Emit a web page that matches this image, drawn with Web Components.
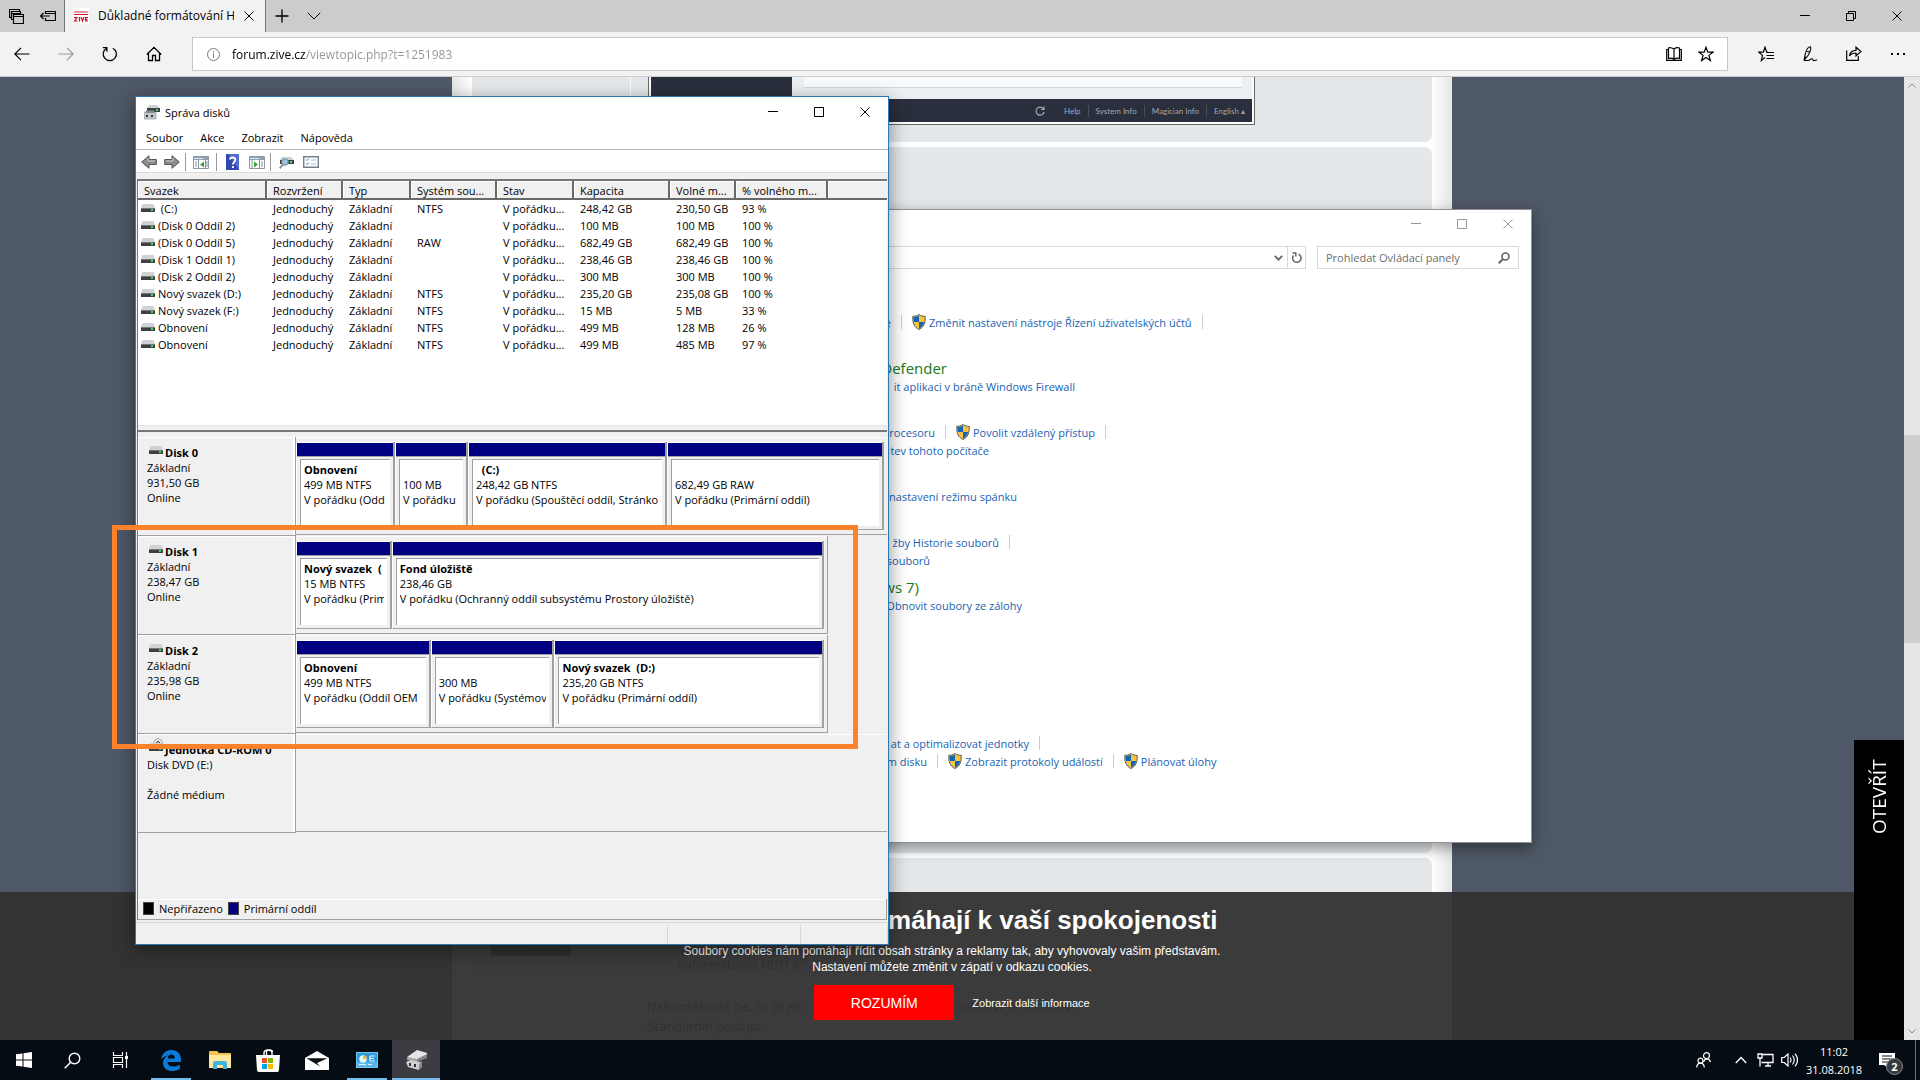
<!DOCTYPE html>
<html lang="cs">
<head>
<meta charset="utf-8">
<title>Správa disků</title>
<style>
html,body{margin:0;height:100%;overflow:hidden}
body{font:11px/15px "Open Sans","Noto Sans",sans-serif;color:#000}
</style>
</head>
<body>
<desk-top></desk-top>
<script>
const base = `*{box-sizing:border-box}button,input,h1,h2,p,a,ul{font:inherit;color:inherit;margin:0;padding:0}
button{border:0;background:none;display:flex;align-items:center;justify-content:center;flex:none}a{text-decoration:none}`;
function define(name, css, html) {
  const tpl = document.createElement('template');
  customElements.define(name, class extends HTMLElement {
    constructor() {
      super();
      tpl.innerHTML = `<style>${base}${css}</style>${typeof html === 'function' ? html(this) : html}`;
      this.attachShadow({mode: 'open'}).append(tpl.content.cloneNode(true));
    }
  });
}

/* ---------- icons ---------- */
const L = 'fill="none" stroke="currentColor"';
const drive = '<path d="M1.500 0h11L14 4H0z" fill="#cfd3d5"/><path d="M0 4h14v4H0z" fill="#3d4142"/><path d="M0 4h14v1H0z" fill="#777"/><path d="M10 5h2v2h-2z" fill="#35e05a"/>';
const icons = {
  tabs: [15, 15, `<path d="M10.500 2.500V.5H.5v8h2M2.500 4.500h9v-2h-9v8h2M4.500 5.500h10v9h-10zM4.500 7.500h10" ${L} stroke-width="1.200"/>`],
  aside: [16, 12, `<path d="M5.500 4V1.500h10v9h-10V8M5.500 3.500h10M.8 6h9M3.500 3 .7 6l2.800 3" ${L} stroke-width="1.200"/>`],
  favicon: [16, 16, `<path fill="#fff" d="M0 0h16v16H0z"/><path d="M1 4.500l1-1 1 1 1-1 1 1 1-1 1 1 1-1 1 1 1-1 1 1 1-1 1 1 1-1 1 1M1 6.500h14" fill="none" stroke="#c8102e" stroke-width="1"/><path d="M1 9.500h3L1.500 13H4.500M6.500 9V13.500M8 9l1.500 4L11 9M15 13h-2.500V9.500H15M12.500 11.300h2" fill="none" stroke="#c8102e" stroke-width="1.200"/>`],
  close: [10, 10, `<path d="M.5.5l9 9M9.500.5l-9 9" ${L}/>`],
  plus: [14, 14, `<path d="M7 .5v13M.5 7h13" ${L} stroke-width="1.300"/>`],
  down: [14, 8, `<path d="M.8.800 7 7 13.200.8" ${L}/>`],
  up: [12, 8, `<path d="M.8 7 6 1.500 11.200 7" ${L} stroke-width="1.400"/>`],
  min: [10, 10, `<path d="M0 4.500h10" ${L}/>`],
  max: [10, 10, `<path d="M.5.5h9v9h-9z" ${L}/>`],
  restore: [10, 10, `<path d="M.5 2.500h7v7h-7zM2.500 2.500v-2h7v7h-2" ${L}/>`],
  back: [16, 14, `<path d="M15.500 7H1M7 .8.800 7 7 13.200" ${L} stroke-width="1.200"/>`],
  fwd: [16, 14, `<path d="M.5 7H15M9 .8 15.200 7 9 13.200" ${L} stroke-width="1.200"/>`],
  reload: [16, 16, `<path d="M4.800 2.200a6.600 6.600 0 1 0 6 0M.9 1.700h4v4" ${L} stroke-width="1.200"/>`],
  home: [16, 16, `<path d="M.8 8.500 8 1.300l7.200 7.200M2.500 7v7.500h4V9.500h3v5h4V7" ${L} stroke-width="1.300"/>`],
  info: [13, 13, `<circle cx="6.500" cy="6.500" r="6" ${L}/><path d="M6.500 3v1.500M6.500 5.500V10" ${L}/>`],
  book: [16, 16, `<path d="M8 3C6 1.500 3 1.500 2.500 2v10.500c2-.5 4-.3 5.500.8 1.500-1.100 3.500-1.300 5.500-.8V2C12 1.500 10 1.500 8 3zv10M2 3.500H.7v10.800h14.600V3.500H14" ${L} stroke-width="1.200"/>`],
  star: [16, 16, `<path d="M8 1.200l1.800 5h5.200l-4.100 3.200 1.500 5.200L8 11.500l-4.400 3.100 1.500-5.200L1 6.200h5.200z" ${L} stroke-width="1.200"/>`],
  favs: [16, 16, `<path d="M10 6.200H8.700L7 1.200l-1.700 5H.8l3.700 3.200-1.200 5 3.700-2.900M8.500 6.500H16M8.500 9.500H16M8.500 12.500H16" ${L} stroke-width="1.200"/>`],
  pen: [16, 16, `<path d="M2 14.500 3 9c1-4 3-8 5-8.200 1.500.2.800 3.700-1.500 8L2 14.500l1.500-4M5 5.500l3 .5M2 14.500h4c2 0 2.500-2 4-1.800 1.200.3.500 2 2 2 1.300 0 1.500-1 3.200-.7" ${L} stroke-width="1.100"/>`],
  share: [16, 16, `<path d="M.7 4.500v9.800h11.600V10M3.500 10c.5-4 3-5.700 6.500-5.700V1.200l5 4.300-5 4.500V7c-3 0-5 .8-6.500 3z" ${L} stroke-width="1.200"/>`],
  dots: [16, 4, `<path d="M1 1h2v2H1zM7 1h2v2H7zM13 1h2v2h-2z" fill="currentColor"/>`],
  cup: [8, 5, `<path d="M.5 4.500 4 1l3.500 3.500" ${L}/>`],
  cdown: [8, 5, `<path d="M.5.5 4 4 7.500.5" ${L}/>`],
  chev: [9, 6, `<path d="M.8.800 4.500 4.700 8.200.8" ${L} stroke-width="1.800"/>`],
  redo: [11, 12, `<path d="M7.500 2.200a4.200 4.200 0 1 1-5 1.300M1.500 1h3.300v3.600" ${L} stroke-width="1.500"/>`],
  spin: [10, 10, `<path d="M8.500 3A4 4 0 1 0 9 6M9 .5V3.500H6" ${L} stroke-width="1.200"/>`],
  find: [12, 12, `<circle cx="7.500" cy="4.500" r="3.500" ${L} stroke-width="1.600"/><path d="M5 7 .7 11.300" ${L} stroke-width="2"/>`],
  shield: [14, 16, `<path d="M7 .5C5 2 3 2.300.8 2.300.5 9 2 13 7 15.500 12 13 13.500 9 13.200 2.300 11 2.300 9 2 7 .5z" fill="#f8c140" stroke="#555c60"/><path d="M7 1.500C5 2.700 3.500 3 1.500 3 1.300 5 1.500 6.500 2 8h5zM7 8v6.700c3-1.600 4.500-3.800 5.200-6.700z" fill="#1267b3"/>`],
  drive: [14, 9, drive],
  cd: [14, 14, `<circle cx="9" cy="5" r="4.300" fill="#eceeee" stroke="#9aa3a6"/><circle cx="9" cy="5" r="1.500" ${L} stroke-width=".8"/><g transform="translate(0,5)">${drive}</g>`],
  app: [16, 16, '<path d="M5 1h8l3 3H3z" fill="#cfd3d5"/><path d="M3 4h13v4H3z" fill="#3d4142"/><path d="M12 5h2v2h-2z" fill="#35e05a"/><path d="M0 8h12v7H0z" fill="#c4c7c9" stroke="#8b8f91" stroke-width=".6"/><path d="M2 6.500h8V9H2z" fill="#898d90"/><path d="M2 11h2v2H2zM7 11h2v2H7z" fill="#333"/>'],
  arrL: [16, 14, '<path d="M8 .7v3.800h7.300v5H8v3.800L.7 7z" fill="#8c8c8c" stroke="#555"/><path d="M7 3v3h7" fill="none" stroke="#c7c7c7"/>'],
  arrR: [16, 14, '<path d="M8 .7v3.800H.7v5H8v3.800L15.300 7z" fill="#8c8c8c" stroke="#555"/><path d="M2 6h7V3" fill="none" stroke="#c7c7c7"/>'],
  paneL: [16, 13, '<path d="M.5.5h15v12H.5z" fill="#fff" stroke="#8b99a6"/><path d="M1 1h14v3H1z" fill="#8fa0b0"/><path d="M1 2.500h9" stroke="#dfe6ec"/><path d="M5.500 4v9M12.500 4v9M2 6h2M2 8h2M2 10h2M13 6h2M13 8h2M13 10h2" stroke="#8293a3"/><path d="M11 5.500v6L7 8.500z" fill="#36a832"/>'],
  paneR: [16, 13, '<path d="M.5.5h15v12H.5z" fill="#fff" stroke="#8b99a6"/><path d="M1 1h14v3H1z" fill="#8fa0b0"/><path d="M1 2.500h9" stroke="#dfe6ec"/><path d="M10.500 4v9M3 4v9M12 6h2M12 8h2M12 10h2" stroke="#8293a3"/><path d="M5 5.500v6l4-3z" fill="#36a832"/>'],
  help: [13, 16, '<path d="M0 0h13v16H0z" fill="#2f49ae"/><path d="M2 0h11v16z" fill="#526cd0"/><path d="M4 5.500C4 3 9.500 2.600 9.300 5.800 9 8 7 8 7 10.500M7 12v2" fill="none" stroke="#fff" stroke-width="1.800"/>'],
  scan: [15, 13, '<path d="M3 1h9l3 3H1z" fill="#cfd3d5"/><path d="M1 4h14v4H1z" fill="#3d4142"/><path d="M11 5h2v2h-2z" fill="#35e05a"/><circle cx="6" cy="6" r="3.300" fill="#9fc4dd" stroke="#6f8a99"/><path d="M4 8.500.7 12.300" stroke="#7a8d98" stroke-width="1.800"/>'],
  list: [16, 12, '<path d="M.7.700h14.600v10.600H.7z" fill="#fff" stroke="#74808a" stroke-width="1.400"/><path d="M3 3.500l1 1 2-2M3 7.500l1 1 2-2" fill="none" stroke="#2c7cc8"/><path d="M8 4h5M8 8h5" stroke="#aab2b8"/>'],
  win: [16, 16, '<path d="M0 2.300 6.500 1.400v6.100H0zM7.500 1.300 16 0v7.500H7.500zM0 8.500h6.500v6.100L0 13.700zM7.500 8.500H16V16l-8.500-1.300z" fill="#fff"/>'],
  search: [17, 17, '<circle cx="10.500" cy="6.500" r="5.300" fill="none" stroke="#fff" stroke-width="1.400"/><path d="M6.700 10.300.7 16.300" stroke="#fff" stroke-width="1.500"/>'],
  task: [16, 16, '<path d="M1.500 0v3.500h9V0M1.500 16v-3.500h9V16M1.500 5.500h9v5h-9zM14.500 0v16" fill="none" stroke="#fff" stroke-width="1.200"/><path d="M13 4h3v3h-3z" fill="#fff"/>'],
  edge: [20, 21, '<path d="M0 9.500C1 4 4.500 0 10.300 0 17 0 20 5 20 9v3H6.500c.2 3 2.500 4.500 5.700 4.500 2.600 0 4.600-.7 6.600-1.800v4.400c-2 1.300-4.500 1.900-7.300 1.900C5.500 21 2 17.500 2 13c0-3.500 2-6 5-7.500C4 6 1.500 7.500 0 9.500zM6.700 8.500h7.200C13.900 6 12.500 4.500 10.400 4.500 8.400 4.500 7 6 6.700 8.500z" fill="#0a7bd8"/>'],
  folder: [22, 18, '<path d="M0 1Q0 0 1 0h7l2 2h11q1 0 1 1v14H0z" fill="#f5c64e"/><path d="M0 4h22v13H0z" fill="#ffe9a0"/><path d="M4 18v-6q0-2 2-2h10q2 0 2 2v6h-4v-4H8v4z" fill="#3fb3dc"/>'],
  store: [24, 23, '<path d="M8 7V4q0-3 4-3t4 3v3M10.500 6V3q0-2 3-2t3 2" fill="none" stroke="#fff" stroke-width="1.400"/><path d="M0 6h24l-1 15q0 2-2 2H3q-2 0-2-2z" fill="#fff"/><path d="M6 9h5v5H6z" fill="#f25022"/><path d="M12 9h5v5h-5z" fill="#7fba00"/><path d="M6 15h5v5H6z" fill="#00a4ef"/><path d="M12 15h5v5h-5z" fill="#ffb900"/>'],
  mail: [24, 19, '<path d="M0 7 12 0l12 7v12H0z" fill="#fff"/><path d="M1.500 7.300h21L12 12l3 3.500z" fill="#0b1017"/>'],
  panel: [22, 16, '<path d="M0 0h22v16H0z" fill="#72c5f1"/><path d="M1 1h20v14H1z" fill="#2c9ade"/><path d="M1 10h20v5H1z" fill="#58b7ea"/><circle cx="7" cy="7" r="3.800" fill="#e6f6ff"/><path d="M7 7V3.200A3.800 3.800 0 0 1 10.800 7z" fill="#f8b133"/><path d="M14 4v5M14 4h5M14 6.500h4M14 9h5M3 12.500h7M12 12.500h4" stroke="#e6f6ff" stroke-width="1.200"/>'],
  dm: [22, 20, '<path d="M2 7 12 0l10 3v4l-10 4z" fill="#e4e4e4"/><path d="M22 4v4l-10 4V9z" fill="#858585"/><path d="M2 7v3l10 2V9z" fill="#a5a5a5"/><path d="M1 12l5-2 9 2-1 8-11-3z" fill="#cfcfcf"/><path d="M4 13h2v3H4zM9 14h2v3H9z" fill="#333"/><path d="M15 12l2-1v6l-3 3z" fill="#8f8f8f"/>'],
  people: [16, 16, '<circle cx="10.500" cy="3.700" r="3" fill="none" stroke="#fff" stroke-width="1.200"/><circle cx="4.500" cy="8.700" r="2.500" fill="none" stroke="#fff" stroke-width="1.200"/><path d="M7.500 10q1-3.200 3.500-3.200T14.500 10M.7 15.500q.3-4.300 3.800-4.300t3.800 4.300" fill="none" stroke="#fff" stroke-width="1.200"/>'],
  net: [17, 14, '<path d="M5 1.500h11v8H4.500M8 13h6M11 9.500V13M1 1h4v4H1zM3 5v8.500" fill="none" stroke="#fff" stroke-width="1.300"/>'],
  sound: [17, 14, '<path d="M.7 4.500h2.500L7 1v12L3.200 9.500H.7z" fill="none" stroke="#fff" stroke-width="1.200"/><path d="M9 4.500q2 2.500 0 5M11.500 2.500q3.500 4.500 0 9M14 .7q5 6.300 0 12.600" fill="none" stroke="#fff" stroke-width="1.200"/>'],
  note: [16, 15, '<path d="M0 0h16v12H9v3l-4-3H0z" fill="#fff"/><path d="M3 3h10M3 6h10M3 9h7" stroke="#0b1017" stroke-width="1.200"/>'],
  photo: [80, 90, '<path d="M0 0h80v90H0z" fill="#4d5440"/><path d="M0 60h80v30H0z" fill="#16190f"/><path d="M44 62h20v20H44z" fill="#3f3a10"/>'],
};
customElements.define('ui-icon', class extends HTMLElement {
  constructor() {
    super();
    this.attachShadow({mode: 'open'});
  }
  connectedCallback() {
    const [w, h, d] = icons[this.getAttribute('name')];
    this.shadowRoot.innerHTML = `<style>:host{display:inline-flex;flex:none}svg{display:block}</style>
      <svg width="${w}" height="${h}" viewBox="0 0 ${w} ${h}" aria-hidden="true">${d}</svg>`;
  }
});
const btn = (name, label, cls = '') => `<button class="${cls}" aria-label="${label}"><ui-icon name="${name}"></ui-icon></button>`;

/* ---------- browser ---------- */
define('browser-tabs', `:host{display:flex;height:32px;background:#ccc;align-items:stretch}
.l{display:flex;width:65px;border-right:1px solid #777}.l button{flex:1}
.tab{display:flex;align-items:center;width:201px;background:#f2f2f2;border-right:1px solid #777;padding:0 2px 0 8px;font-size:12px}
.t{width:136px;overflow:hidden;white-space:nowrap;margin:0 0 0 9px;line-height:20px}
.tab button{flex:1}.n{width:32px}.sp{flex:1}.w{width:46px}`,
`<div class="l">${btn('tabs', 'Karty')}${btn('aside', 'Odložit karty')}</div>
<div class="tab"><ui-icon name="favicon"></ui-icon><span class="t">Důkladné formátování H</span>${btn('close', 'Zavřít kartu')}</div>
${btn('plus', 'Nová karta', 'n')}${btn('down', 'Náhledy', 'n')}<span class="sp"></span>
${btn('min', 'Minimalizovat', 'w')}${btn('restore', 'Obnovit', 'w')}${btn('close', 'Zavřít', 'w')}`);

define('browser-bar', `:host{display:flex;height:45px;background:#f2f2f2;border-bottom:1px solid #c9cdd0;align-items:center}
button{width:44px;height:44px}.dim{color:#999}
.addr{flex:1;display:flex;align-items:center;height:34px;margin:0 16px;background:#fff;border:1px solid #c8c8c8;padding:0 5px 0 14px}
.addr ui-icon{color:#777}.addr button{width:32px;height:32px}.addr button ui-icon{color:#000}
input{flex:1;border:0;outline:0;height:24px;margin-left:12px;font-size:12px;color:#000;-webkit-text-fill-color:transparent;background:linear-gradient(90deg,#000 74px,#949494 74px);-webkit-background-clip:text;background-clip:text}`,
`${btn('back', 'Zpět')}${btn('fwd', 'Vpřed', 'dim')}${btn('reload', 'Obnovit')}${btn('home', 'Domů')}
<div class="addr"><ui-icon name="info"></ui-icon><input aria-label="Adresa" value="forum.zive.cz/viewtopic.php?t=1251983">${btn('book', 'Čtení')}${btn('star', 'Oblíbené')}</div>
${btn('favs', 'Centrum')}${btn('pen', 'Poznámky')}${btn('share', 'Sdílet')}${btn('dots', 'Další')}`);

define('scroll-bar', `:host{display:flex;flex-direction:column;align-items:center;width:16px;background:#e6e6e6;color:#888;padding:6px 0}
.a{flex:347}.t{flex:208;width:100%;background:#cdcdcd}.b{flex:386}`,
`<ui-icon name="cup"></ui-icon><div class="a"></div><div class="t"></div><div class="b"></div><ui-icon name="cdown"></ui-icon>`);

define('forum-page', `:host{display:flex;justify-content:center;background:#4f5866;min-height:0}
main{width:1000px;background:#fff;display:flex;flex-direction:column;gap:5px;padding:0 20px;background:linear-gradient(90deg,#e6e6e6,#fff 20px,#fff 980px,#e6e6e6)}
section{background:#e4e8eb;border-radius:7px;font:12px/20px "DejaVu Sans",sans-serif;color:#333}
.one{height:65px;border-radius:0 0 7px 7px;display:flex;padding-left:158px}
.side{border-left:1px solid #f6f8f9;width:18px}
.shot{width:607px;height:48px;border:solid #666;border-width:0 1px 1px;background:#fff;padding:0 2px 2px;display:flex;flex-direction:column}
.top{flex:1;display:flex;background:#eceff2}.dark{width:141px;background:#2a2f3d}.card{flex:1;margin:0 10px 11px 12px;background:#f8f9fa;border-bottom:1px solid #d4d8dc}
.bar{height:23px;background:#2a2f3d;display:flex;align-items:center;justify-content:flex-end;font:8px/12px Lato,sans-serif;color:#a4a8b2;padding-right:7px;gap:7px}
.bar ui-icon{margin-right:12px}.bar span+span{border-left:1px solid #4a4f5c;padding-left:7px}
.two{flex:none;height:706px}.three{flex:1;border-radius:7px 7px 0 0;display:flex;padding-left:19px;overflow:hidden}
ui-icon{align-self:center}.three ui-icon{align-self:flex-start;margin-top:8px}
.post{padding-top:97px;margin-left:76px}.q{padding-left:30px;margin-bottom:22px}.s{display:flex;white-space:nowrap}.s span:first-child{width:308px}`,
`<main><section class="one"><div class="side"></div><div class="shot"><div class="top"><div class="dark"></div><div class="card"></div></div>
<div class="bar"><ui-icon name="spin"></ui-icon><span>Help</span><span>System Info</span><span>Magician Info</span><span>English ▴</span></div></div></section>
<section class="two"></section>
<section class="three"><ui-icon name="photo"></ui-icon><div class="post"><p class="q">naformatoval HDD a</p><p class="s"><span>Naformátovat ne, to je jen</span><span>; obnoví je kdokoliv.</span></p><p>Standardní postup:</p></div></section></main>`);

define('open-tab', `:host{display:block;width:50px;height:300px;background:#000;color:#fff}
button{width:100%;height:113px;writing-mode:vertical-rl;transform:rotate(180deg);font:19px/24px "Open Sans",sans-serif}`,
`<button>OTEVŘÍT</button>`);

define('cookie-bar', `:host{display:flex;flex-direction:column;align-items:center;height:148px;background:rgba(49,49,49,.95);color:#fff;font:12px/16px "Liberation Sans",sans-serif;padding-top:10px;text-align:center}
h2{font-size:26px;font-weight:700;line-height:36px;width:531px;text-align:right;margin-bottom:5px}
.r{display:flex;align-items:center;gap:18px;margin-top:10px}button{width:140px;height:35px;background:#f00;font-size:14px}.r a{font-size:11px}`,
`<h2>máhají k vaší spokojenosti</h2><p>Soubory cookies nám pomáhají řídit obsah stránky a reklamy tak, aby vyhovovaly vašim představám.</p>
<p>Nastavení můžete změnit v zápatí v odkazu cookies.</p><div class="r"><button>ROZUMÍM</button><a href="#">Zobrazit další informace</a></div>`);

/* ---------- control panel window ---------- */
define('shield-link', `:host{display:inline-flex;align-items:center;gap:3px}`, `<ui-icon name="shield"></ui-icon><a href="#"><slot></slot></a>`);
const lead = (end, text) => `<a href="#" class="lead" style="width:${end}px">${text}</a>`;
define('control-panel', `:host{display:flex;flex-direction:column;background:#fff;border:1px solid #8f9397;box-shadow:0 5px 14px rgba(0,0,0,.4);color:#1963b4}
.title{display:flex;justify-content:flex-end;height:28px;color:#999}.title button{width:46px}
.nav{display:flex;height:23px;margin:8px 12px 0 0;color:#666}
.path{flex:1;border:1px solid #d9d9d9;display:flex;justify-content:flex-end}.path button{width:18px}.path button+button{border-left:1px solid #d9d9d9}
.find{width:202px;margin-left:11px;border:1px solid #d9d9d9;display:flex;align-items:center;padding:0 8px}
input{flex:1;min-width:0;border:0;outline:0;background:none}input::placeholder{color:#6d6d6d;opacity:1}
.body{padding:44px 0 0 38px;display:flex;flex-direction:column}
.row{display:flex;height:18px;align-items:center;white-space:nowrap;gap:10px}
.lead{display:flex;justify-content:flex-end}.row i{width:1px;height:14px;background:#ccc}
.g{font-size:15px;color:#1a7a24}.gap{margin-top:28px}`,
`<div class="title">${btn('min', 'Minimalizovat')}${btn('max', 'Maximalizovat')}${btn('close', 'Zavřít')}</div>
<div class="nav"><div class="path">${btn('chev', 'Předchozí umístění')}${btn('redo', 'Aktualizovat')}</div>
<label class="find"><input aria-label="Prohledat Ovládací panely" placeholder="Prohledat Ovládací panely"><ui-icon name="find"></ui-icon></label></div>
<div class="body">
<div class="row">${lead(2, 'e')}<i></i><shield-link>Změnit nastavení nástroje Řízení uživatelských účtů</shield-link><i></i></div>
<div class="row g gap">${lead(58, 'Defender')}</div>
<div class="row">${lead(186, 'it aplikaci v bráně Windows Firewall')}</div>
<div class="row gap">${lead(46, 'rocesoru')}<i></i><shield-link>Povolit vzdálený přístup</shield-link><i></i></div>
<div class="row">${lead(100, 'tev tohoto počítače')}</div>
<div class="row gap">${lead(128, 'nastavení režimu spánku')}</div>
<div class="row gap">${lead(110, 'žby Historie souborů')}<i></i></div>
<div class="row">${lead(41, 'souborů')}</div>
<div class="row g" style="margin-top:9px">${lead(30, 'ws 7)')}</div>
<div class="row">${lead(133, 'Obnovit soubory ze zálohy')}</div>
<div class="row" style="margin-top:120px">${lead(140, 'at a optimalizovat jednotky')}<i></i></div>
<div class="row">${lead(38, 'm disku')}<i></i><shield-link>Zobrazit protokoly událostí</shield-link><i></i><shield-link>Plánovat úlohy</shield-link></div>
</div>`);

/* ---------- disk management window ---------- */
const vols = [
  ['\u00a0(C:)', 'NTFS', '248,42 GB', '230,50 GB', '93 %'], ['(Disk 0 Oddíl 2)', '', '100 MB', '100 MB', '100 %'],
  ['(Disk 0 Oddíl 5)', 'RAW', '682,49 GB', '682,49 GB', '100 %'], ['(Disk 1 Oddíl 1)', '', '238,46 GB', '238,46 GB', '100 %'],
  ['(Disk 2 Oddíl 2)', '', '300 MB', '300 MB', '100 %'], ['Nový svazek (D:)', 'NTFS', '235,20 GB', '235,08 GB', '100 %'],
  ['Nový svazek (F:)', 'NTFS', '15 MB', '5 MB', '33 %'], ['Obnovení', 'NTFS', '499 MB', '128 MB', '26 %'], ['Obnovení', 'NTFS', '499 MB', '485 MB', '97 %']];
define('volume-list', `:host{display:block;background:#fff;border-top:2px solid #777;overflow:hidden}
table{width:100%;border-collapse:separate;border-spacing:0;table-layout:fixed}
th{height:19px;background:#f0f0f0;border:solid #696969;border-width:0 2px 2px 0;box-shadow:inset 1px 1px #fff;font-weight:400;text-align:left;padding:2px 0 0 6px;white-space:nowrap;overflow:hidden}
th:last-child{border-right:0}td{height:17px;padding:0 0 0 6px;line-height:17px;white-space:nowrap}
td:first-child{padding-left:3px}td ui-icon{margin-right:3px}`,
`<table><colgroup>${[129, 76, 68, 86, 77, 96, 66, 92].map(w => `<col style="width:${w}px">`).join('')}<col></colgroup>
<thead><tr>${['Svazek', 'Rozvržení', 'Typ', 'Systém sou...', 'Stav', 'Kapacita', 'Volné m...', '% volného m...', ''].map(t => `<th>${t}</th>`).join('')}</tr></thead>
<tbody>${vols.map(v => `<tr><td><ui-icon name="drive"></ui-icon>${v[0]}</td><td>Jednoduchý</td><td>Základní</td><td>${v[1]}</td><td>V pořádku...</td><td>${v[2]}</td><td>${v[3]}</td><td>${v[4]}</td><td></td></tr>`).join('')}</tbody></table>`);

define('disk-part', `:host{display:flex;flex-direction:column;min-width:0;border-left:1px solid #fff;border-right:2px solid #a0a0a0;border-bottom:1px solid #a0a0a0}
.bar{height:14px;background:#000080;border-top:1px solid #fff}
.wrap{flex:1;display:flex;border-top:1px solid #a0a0a0;padding:2px 3px 3px;min-width:0}
.in{flex:1;min-width:0;background:#fff;border:solid #a0a0a0;border-width:1px 0 0 1px;padding:2px 3px 0}
p{overflow:hidden;white-space:pre;height:15px;line-height:15px}.n{font-weight:700}`,
h => `<div class="bar"></div><div class="wrap"><div class="in"><p class="n">${h.getAttribute('label')}</p><p>${h.getAttribute('size')}</p><p><slot></slot></p></div></div>`);

define('disk-row', `:host{display:flex;height:99px}
.lab{width:158px;flex:none;border:solid #a0a0a0;border-width:0 1px 1px 0;box-shadow:inset 1px 1px #fff,inset -2px 0 #fff;padding:8px 0 0 9px;white-space:nowrap}
.lab div{height:15px}.n{display:flex;font-weight:700;padding-left:2px;gap:2px}.n ui-icon{align-self:flex-end;margin-bottom:5px}
.g{display:flex;padding:5px 3px 4px 0;margin-bottom:1px;width:var(--w,100%);border:solid #a0a0a0;border-width:0 1px 1px 0;box-shadow:inset 0 1px #fff}
:host([full]) .g{border-right:0}.r{flex:1;display:flex;min-width:0}`,
h => `<div class="lab"><div class="n"><ui-icon name="${h.getAttribute('icon') || 'drive'}"></ui-icon>${h.getAttribute('label')}</div>${h.getAttribute('info').split('|').map(t => `<div>${t}</div>`).join('')}</div><div class="r"><div class="g"><slot></slot></div></div>`);

const part = (w, n, s, t) => `<disk-part style="flex:${w} 1 0" label="${n}" size="${s}">${t}</disk-part>`;
define('disk-manager', `:host{display:flex;flex-direction:column;background:#f0f0f0;border:1px solid #2a7ab8;box-shadow:0 5px 18px rgba(0,0,0,.45)}
.title{display:flex;align-items:center;height:30px;background:#fff;padding-left:8px}.title button{width:46px;height:30px}.title span{flex:1;margin-left:5px}
.menu{display:flex;height:23px;background:#fff;border-bottom:1px solid #b8b8b8;padding-left:2px}.menu button{padding:0 9px 2px 8px}
.tools{display:flex;align-items:center;height:23px;background:#fff;border-bottom:1px solid #dadada;padding:2px 0 0 1px}
.tools button{width:23px;height:20px}.tools .p{width:26px}.tools i{width:1px;height:18px;background:#999;margin:0 2px}
.pane{flex:1;display:flex;flex-direction:column;min-height:0;margin:6px 1px 0;border-left:1px solid #777}
volume-list{height:246px}.split{height:7px;border-top:1px solid #e3e3e3;border-bottom:2px solid #777}
.disks{flex:1;padding-top:5px;min-height:0}
.legend{display:flex;align-items:center;height:21px;border:solid #a0a0a0;border-width:0 1px 1px 0;box-shadow:inset 0 1px #fff;padding:0 0 1px 5px}
.legend b{width:11px;height:13px;background:#000;margin-right:5px;border:1px solid #444}.legend b+span{margin-right:5px}.legend .pr{background:#000080}
.status{display:flex;height:22px;margin-top:2px;border-top:1px solid #d7d7d7;padding-top:2px}
.status div{border-right:1px solid #d7d7d7}`,
`<div class="title"><ui-icon name="app"></ui-icon><span>Správa disků</span>${btn('min', 'Minimalizovat')}${btn('max', 'Maximalizovat')}${btn('close', 'Zavřít')}</div>
<div class="menu"><button>Soubor</button><button>Akce</button><button>Zobrazit</button><button>Nápověda</button></div>
<div class="tools">${btn('arrL', 'Zpět')}${btn('arrR', 'Vpřed')}<i></i>${btn('paneL', 'Strom', 'p')}<i></i>${btn('help', 'Nápověda', 'p')}${btn('paneR', 'Podokno akcí')}<i></i>${btn('scan', 'Prohledat disky', 'p')}${btn('list', 'Vlastnosti')}</div>
<div class="pane"><volume-list></volume-list><div class="split"></div><div class="disks">
<disk-row full label="Disk 0" info="Základní|931,50 GB|Online">${part(96, 'Obnovení', '499 MB NTFS', 'V pořádku (Odd')}${part(70, '', '100 MB', 'V pořádku')}${part(196, '&nbsp; (C:)', '248,42 GB NTFS', 'V pořádku (Spouštěcí oddíl, Stránko')}${part(214, '', '682,49 GB RAW', 'V pořádku (Primární oddíl)')}</disk-row>
<disk-row style="--w:90%" label="Disk 1" info="Základní|238,47 GB|Online">${part(93, 'Nový svazek &nbsp;(', '15 MB NTFS', 'V pořádku (Prim')}${part(430, 'Fond úložiště', '238,46 GB', 'V pořádku (Ochranný oddíl subsystému Prostory úložiště)')}</disk-row>
<disk-row style="--w:90%" label="Disk 2" info="Základní|235,98 GB|Online">${part(132, 'Obnovení', '499 MB NTFS', 'V pořádku (Oddíl OEM')}${part(121, '', '300 MB', 'V pořádku (Systémov')}${part(267, 'Nový svazek &nbsp;(D:)', '235,20 GB NTFS', 'V pořádku (Primární oddíl)')}</disk-row>
<disk-row full icon="cd" label="Jednotka CD-ROM 0" info="Disk DVD (E:)||Žádné médium"></disk-row></div>
<div class="legend"><b></b><span>Nepřiřazeno</span><b class="pr"></b><span>Primární oddíl</span></div></div>
<div class="status"><div style="flex:532"></div><div style="flex:133"></div><div style="flex:86"></div></div>`);

/* ---------- taskbar ---------- */
define('task-bar', `:host{display:flex;height:40px;background:#060c14;color:#fff;align-items:stretch}
.b{width:48px}.app{width:49px}.run{position:relative}.run::after{content:"";position:absolute;left:4px;right:4px;bottom:0;height:2px;background:#76b9ed}
.on{background:#3b3d42;width:48px}.on::after{left:0;right:0}.sp{flex:1}.p{width:50px}.s{width:24px}
.clock{width:62px;text-align:center;line-height:18px;padding:2px 0 0 4px;display:block}
.n{width:48px;position:relative;margin-right:4px}.n span{position:absolute;left:23px;top:18px;width:17px;height:17px;border-radius:50%;background:#333a40;border:1px solid #888;font:700 11px/15px "Open Sans",sans-serif}
.e{width:5px;border-left:1px solid #70757b}`,
`${btn('win', 'Start', 'b')}${btn('search', 'Hledat', 'b')}${btn('task', 'Zobrazení úkolů', 'b')}<span style="width:3px"></span>${btn('edge', 'Edge', 'b run')}${btn('folder', 'Průzkumník', 'app')}${btn('store', 'Store', 'b')}${btn('mail', 'Pošta', 'app')}<span style="width:2px"></span>${btn('panel', 'Ovládací panely', 'b run')}<span style="width:1px"></span>${btn('dm', 'Správa disků', 'run on')}
<span class="sp"></span>${btn('people', 'Lidé', 'p')}${btn('up', 'Skryté ikony', 's')}${btn('net', 'Síť', 's')}${btn('sound', 'Hlasitost', 's')}<button class="clock"><div>11:02</div><div>31.08.2018</div></button><button class="n" aria-label="Centrum akcí"><ui-icon name="note"></ui-icon><span>2</span></button><div class="e"></div>`);

define('desk-top', `:host{display:flex;flex-direction:column;height:100vh;position:relative;overflow:hidden}
.view{flex:1;display:flex;min-height:0;position:relative}forum-page{flex:1}
open-tab{position:absolute;right:16px;bottom:0}cookie-bar{position:absolute;left:0;right:16px;bottom:0}
control-panel{position:absolute;left:850px;top:209px;width:682px;height:634px}
disk-manager{position:absolute;left:135px;top:96px;width:754px;height:849px}
.mark{position:absolute;left:112px;top:525px;width:746px;height:224px;border:5px solid #fc812b}`,
`<browser-tabs></browser-tabs><browser-bar></browser-bar>
<div class="view"><forum-page></forum-page><scroll-bar></scroll-bar><cookie-bar></cookie-bar><open-tab></open-tab></div>
<task-bar></task-bar><control-panel></control-panel><disk-manager></disk-manager><div class="mark"></div>`);
</script>
</body>
</html>
